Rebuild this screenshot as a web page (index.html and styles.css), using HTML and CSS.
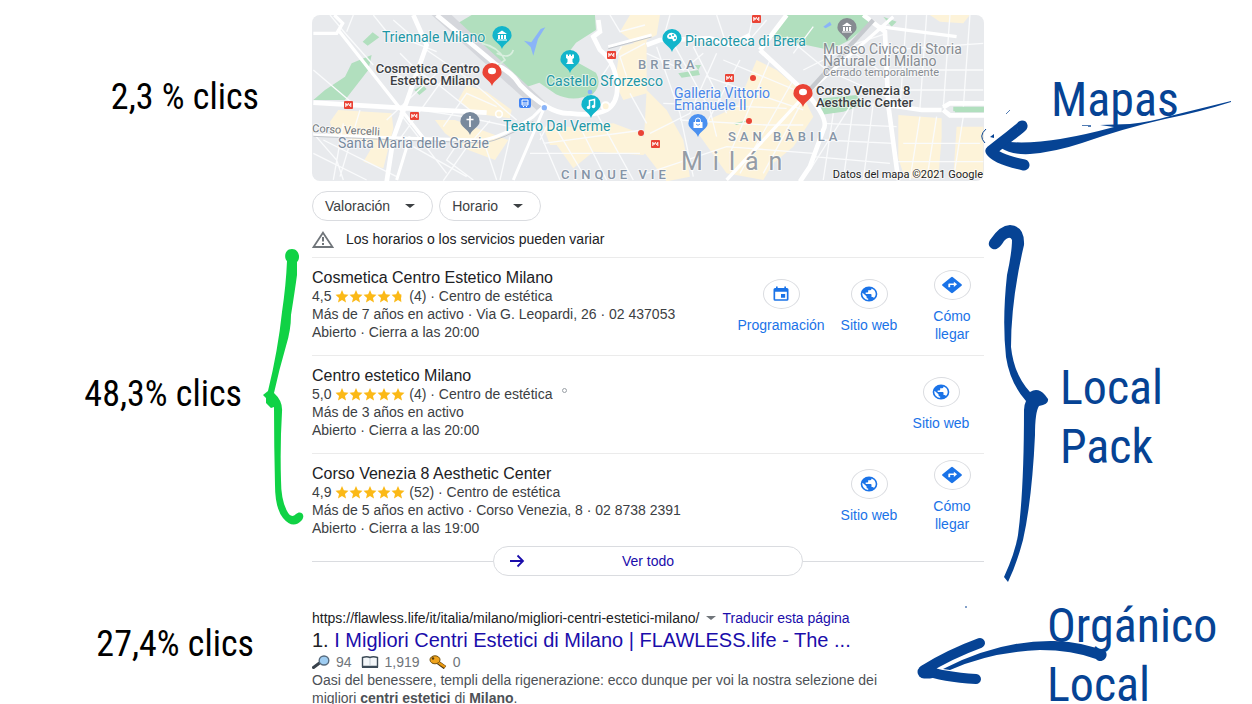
FILE: index.html
```html
<!DOCTYPE html>
<html lang="es">
<head>
<meta charset="utf-8">
<meta name="viewport" content="width=device-width, initial-scale=1">
<title>Reparto de clics en la búsqueda local</title>
<link rel="stylesheet" href="styles.css">
</head>
<body>
<svg class="defs" aria-hidden="true">
  <symbol id="star" viewBox="0 0 24 24"><path d="M12 0l3.400 8 8.600.8-6.500 5.800 1.900 8.400L12 18.600 4.600 23l1.900-8.400L0 8.800 8.600 8z"/></symbol>
  <symbol id="globe" viewBox="0 0 24 24" preserveAspectRatio="none"><path d="M12 2a10 10 0 1 0 0 20 10 10 0 0 0 0-20zm-1 17.930A8 8 0 0 1 4.210 10.210L9 15v1a2 2 0 0 0 2 2v1.930zm6.900-2.540A2 2 0 0 0 16 16h-1v-3a1 1 0 0 0-1-1H8v-2h2a1 1 0 0 0 1-1V7h2a2 2 0 0 0 2-2v-.410a8 8 0 0 1 2.900 12.800z"/></symbol>
  <symbol id="route" viewBox="0 0 24 24" preserveAspectRatio="none"><path d="M22.400 11l-9.400-9.400a1.400 1.400 0 0 0-2 0L1.600 11a1.400 1.400 0 0 0 0 2l9.400 9.400a1.400 1.400 0 0 0 2 0l9.400-9.400a1.400 1.400 0 0 0 0-2zM14 14.500V12h-4v3H8v-4a1 1 0 0 1 1-1h5V7.500l3.500 3.500z"/></symbol>
  <symbol id="calendar" viewBox="0 0 24 24" preserveAspectRatio="none"><path d="M17 12h-5v5h5zM16 2v2H8V2H6v2H5a2 2 0 0 0-2 2v13a2 2 0 0 0 2 2h14a2 2 0 0 0 2-2V6a2 2 0 0 0-2-2h-1V2zm3 17H5V9h14z"/></symbol>
  <symbol id="pin" viewBox="0 0 20 23"><path d="M10 0a9.600 9.600 0 0 0-9.600 9.600C.4 15 8 17 10 23c2-6 9.600-8 9.600-13.400A9.600 9.600 0 0 0 10 0z"/></symbol>
  <symbol id="metro" viewBox="0 0 9 8"><rect width="9" height="8" rx="1" fill="#ea4335"/><path d="M1.800 6V2.300l1.200 2.500 1.300-2.500 1.300 2.500 1.200-2.500V6" fill="none" stroke="#fff"/></symbol>
</svg>

<main class="page">
  <section class="row row-map">
    <div class="share share-map">2,3 % clics</div>
    <div class="map">
      <svg viewBox="0 0 672 166" preserveAspectRatio="xMidYMid slice" role="img" aria-label="Mapa de Milán">
        <rect width="672" height="166" fill="#e8eaed"/>
        <g transform="scale(.3333) translate(-6 -15)">
          <g fill="#fdf3d9">
            <path d="M470 225l60 20 75 55-5 25-110-15-45-40zM85 300l160 10 5 45-30 120-60-20 30-50-120-30-10-40zM375 330l60 0 160 60-40 60-80-30-70-50zM700 350l110 0 100-10 80 30 40 40-30 25-150-10-60 50-50-70-20 0z"/>
            <path d="M930 110l80-20 0 160-70 20-25-50zM960 15h90l-10 60-60 30-50-40zM1010 240l60 60 50 90 20 110-70 14-70-90zM1150 350l130-60 60-140 60 30 70 60 40 80-60 90-60 50-30 50-110-20zM1765 315l130 10 0 60-10 120-100 0-20-60zM1940 350h80v150h-90zM1860 15h120l-20 25-70-5z"/>
          </g>
          <g fill="#b1dfbe">
            <path d="M485 15h370l3 45-60 38-30 40 90 50q20 35-10 65-60 25-110 0l-50-35-45 15-35-10-105-105-20-30-45-45z"/>
            <path d="M10 270l35-30 60-40 20-40 60-25-10 45-70 90zM158 95l30-28 20 15-35 25zM313 240l25-15 12 12-22 18z"/>
            <path d="M1425 15h245l10 25-60 50-60 30-190-40 30-30zM1540 265l100-10 20 30-60 20-70 10zM1105 190l60-10 5 15-55 8zM1155 165l18 0-8 15zM1270 340l50-10-40 15zM1935 293h87v14h-87zM1720 20l40 15-15 15z"/>
          </g>
          <path d="M642 92l22 5 28-40 14-5-22 35-14 50-8-26z" fill="#8ab4f8"/>
          <path d="M365 15h60l285 265-30 20z" fill="#d5d7dc"/>
          <g fill="none" stroke="#fafbfc" stroke-width="4">
            <path d="M10 180l130 110M60 15l50 60 80 90M190 15l40 50 150 60M100 340l-30 170M150 300l-60 200M10 430l160 80M40 390l220 110M330 100l-80-70M350 120l130 90 140 120M300 170l80 50 100 80M300 250l-30 60 140 180M230 330l150-140M260 400l130-180 70-60M400 512l70-100 70-80M310 410l160 90M450 390l-40 60 80 60M520 390l40 120M600 380l-30 130M330 300l130 20 190 40M400 350l70-100 90 40M10 370l70 80 20 60M690 370l60 140M730 340l100 170M800 330l90 180M860 310l110 200M660 430h330M700 400l300-40M900 15l30 50 75-20M935 110l-60 90M950 200l-20-60 75-40M960 250l50 90M720 330l-30 60M130 15l-20 50M220 170l70 40M270 130l60 60"/>
            <path d="M1010 130l110 50 60-50M1040 110l70 200 40 190M1090 100l110 200 20 80M1150 110l100 200M1220 130l-80 180-120 60M1290 150l-100 190M1380 150l-120 280M1450 210l-160 280M1490 250l-130 240M1110 330l260 15 110 0M1060 280l370 15M1190 200l290 100M1240 150l240 100M1330 15l-20 90M1220 15l30 90M1370 30l-60 70M1080 15l-20 70M1540 340l220 10M1540 390l210 10M1510 440l230 20M1570 310l-30 200M1630 290l-30 220M1690 280l-30 230M1500 480l120-190M1780 400h230M1760 455h260M1830 320l-30 190M1880 320l-30 190M1960 320l-30 190M1730 240h290M1730 180h290M1740 120l280-20M1790 15l-20 280M1850 15l-20 280M1920 15l-20 280M1980 15l-20 280M1430 80l120 100 200 90M1480 180l160-80 90-30M1620 120l100 70M1450 130l60-80M1010 490l240-80 260 20"/>
          </g>
          <g fill="none" stroke="#fff">
            <path d="M10 70h70l18-30-25-25M85 60l260 330" stroke-width="10"/>
            <path d="M10 278l340 20 180 10M310 15l40 90-60 170-40 110-20 130M380 15l120 100 60 50q45 20 70 60 90 90 150 85 70 10 110-10 40-25 30-90-10-60-50-90l-20-40 20-15-5-35" stroke-width="14"/>
            <path d="M10 375l280 10 230 5q60-10 150-70l40-40M895 110l130-35M300 380l-40 130M700 300l-90 210" stroke-width="9"/>
            <path d="M1010 105l40-15 150-5 60 20 60-30M1350 120l140 130q70 80 50 110l-40 110-30 45M1430 15l-80 105M1660 15l65 50 10 220 30 225M1735 285l100 15 60 0M1900 292l20-12h110M1900 300l20 16h110" stroke-width="14"/>
            <path d="M1750 20l-260 230-240 260M1710 50l230 30" stroke-width="10"/>
          </g>
          <path d="M1930 290h92v14h-92z" fill="#b1dfbe"/>
          <path d="M10 379l280 12 230 8q60-10 150-65M895 116l130-35" stroke="#c1c5ca" fill="none" stroke-width="3"/>
          <path d="M1690 30l-200 220" stroke="#c6c9ce" fill="none" stroke-width="13"/>
          <path d="M515 100q50 10 70 50l-25 20M560 130q40 20 50-10" stroke="#d9efdf" fill="none" stroke-width="5"/>
          <g fill="#8ab4f8"><circle cx="703" cy="293" r="8"/><circle cx="840" cy="246" r="7"/><path d="M1540 50l20-15 5 10-18 10z"/></g>
          <circle cx="887" cy="289" r="12" fill="#fdf3d9" stroke="#fff" stroke-width="6"/>
          <circle cx="567" cy="312" r="10" fill="#fdf3d9" stroke="#fff" stroke-width="5"/>
        </g>

        <use href="#metro" x="32" y="86" width="9" height="8"/>
        <use href="#metro" x="98" y="97" width="9" height="8"/>
        <use href="#metro" x="295" y="36" width="9" height="8"/>
        <use href="#metro" x="440" y="0" width="9" height="8"/>
        <use href="#metro" x="413" y="59" width="9" height="8"/>
        <use href="#metro" x="339" y="125" width="9" height="8"/>
        <g fill="#ea4335"><circle cx="329" cy="118" r="3"/><circle cx="441" cy="63" r="3"/><circle cx="437" cy="106" r="3"/></g>
        <rect x="207" y="83" width="12" height="10" rx="2" fill="#4285f4"/>
        <path d="M210 85h6v5h-6zM210 88h6M211 92l1-1M215 92l-1-1" fill="none" stroke="#fff"/>

        <g class="map-pins">
          <g transform="translate(180 11)"><use href="#pin" width="20" height="23" fill="#12b5cb"/><path d="M5 8l5-3.500L15 8zM6 9h2v4H6zm3 0h2v4H9zm3 0h2v4h-2zM5 13.500h10v1H5z" fill="#fff"/></g>
          <g transform="translate(248 35)"><use href="#pin" width="20" height="23" fill="#12b5cb"/><path d="M6 4.500h2V6h1V4.500h2V6h1V4.500h2V8l-1.500 1v3l1.500 2H6l1.500-2V9L6 8z" fill="#fff"/></g>
          <g transform="translate(269 80)"><use href="#pin" width="20" height="23" fill="#12b5cb"/><path d="M8.500 12.500V5.500l5-1v7" fill="none" stroke="#fff" stroke-width="1.500"/><circle cx="7.500" cy="12.500" r="1.700" fill="#fff"/><circle cx="12.500" cy="11.500" r="1.700" fill="#fff"/></g>
          <g transform="translate(350 14)"><use href="#pin" width="20" height="23" fill="#12b5cb"/><path d="M5 7q2-4 6-3 4 1 4 5-1 4-4 3 0-3-3-2-3 0-3-3z" fill="#fff"/><g fill="#12b5cb"><circle cx="8" cy="7" r="1"/><circle cx="11" cy="6" r="1"/><circle cx="13" cy="9" r="1"/></g></g>
          <g transform="translate(148 97)"><use href="#pin" width="20" height="23" fill="#78899d"/><path d="M10 4v11M6.500 7.500h7" fill="none" stroke="#fff" stroke-width="1.700"/></g>
          <g transform="translate(525 3)"><use href="#pin" width="20" height="23" fill="#868b91"/><path d="M5 8l5-3.500L15 8zM6 9h2v4H6zm3 0h2v4H9zm3 0h2v4h-2zM5 13.500h10v1H5z" fill="#fff"/></g>
          <g transform="translate(376 99)"><use href="#pin" width="20" height="23" fill="#4a90f0"/><path d="M5.500 8h9v6h-9z" fill="#fff"/><path d="M7.500 8V6.500a2.500 2.500 0 0 1 5 0V8" fill="none" stroke="#fff"/><path d="M8 10q2 2.500 4 0" fill="none" stroke="#4a90f0"/></g>
          <g transform="translate(170 48)"><use href="#pin" width="20" height="23" fill="#ea4335"/><ellipse cx="10" cy="8" rx="4" ry="3.300" fill="#fff"/></g>
          <g transform="translate(481 69)"><use href="#pin" width="20" height="23" fill="#ea4335"/><ellipse cx="10" cy="8" rx="4" ry="3.300" fill="#fff"/></g>
        </g>

        <g class="map-text">
          <text class="poi culture" x="70" y="27">Triennale Milano</text>
          <text class="poi culture" x="234" y="71">Castello Sforzesco</text>
          <text class="poi culture" x="191" y="116">Teatro Dal Verme</text>
          <text class="poi culture" x="373" y="31">Pinacoteca di Brera</text>
          <text class="poi church" x="26" y="133">Santa Maria delle Grazie</text>
          <text class="poi shop" x="362" y="83">Galleria Vittorio</text>
          <text class="poi shop" x="362" y="95">Emanuele II</text>
          <text class="poi closed" x="511" y="39">Museo Civico di Storia</text>
          <text class="poi closed" x="511" y="51">Naturale di Milano</text>
          <text class="note closed" x="511" y="61">Cerrado temporalmente</text>
          <text class="place" x="168" y="58" text-anchor="end">Cosmetica Centro</text>
          <text class="place" x="168" y="70" text-anchor="end">Estetico Milano</text>
          <text class="place" x="504" y="80">Corso Venezia 8</text>
          <text class="place" x="504" y="92">Aesthetic Center</text>
          <text class="note street" x="0" y="117" transform="rotate(3 0 117)">Corso Vercelli</text>
          <text class="area" x="326" y="54">BRERA</text>
          <text class="area" x="416" y="126">SAN BÀBILA</text>
          <text class="area" x="249" y="164">CINQUE VIE</text>
          <text class="city" x="369" y="155">Milán</text>
          <text class="credit" x="671" y="163" text-anchor="end">Datos del mapa ©2021 Google</text>
        </g>
      </svg>
    </div>
    <div class="side">
      <div class="tag tag-map">Mapas</div>
      <svg class="arrow arrow-map" viewBox="976 98 260 76" aria-hidden="true">
        <path d="M1024 165Q996 159 991 151Q997 146 1010 136T1022 126" fill="none" stroke="#064394" stroke-width="11" stroke-linecap="round" stroke-linejoin="round"/>
        <path d="M1231 101L1170 116Q1150 122 1130 124L1100 125 1114 127Q1048 145 1010 142L1001 148Q1012 155 1030 154Q1055 152 1082 143Q1125 128 1165 119Q1200 112 1231 102z" fill="#064394"/>
        <path d="M986 129q-8 7-1 14" fill="none" stroke="#064394"/>
        <path d="M990 137l4-3v4z" fill="#064394"/>
        <path d="M1006 114l4-4M1082 125.500h9M1088 126.500h3" fill="none" stroke="#064394" stroke-width=".7"/>
      </svg>
    </div>
  </section>

  <section class="row row-pack">
    <div class="share-wrap">
      <div class="share share-pack">48,3% clics</div>
      <svg class="brace-left" viewBox="262 248 42 278" aria-hidden="true">
        <path d="M292 249C284 249 284 259 287 261Q286 285 282 312Q278 350 268 391L263 395 266 398 266 403 271 408 274 407Q274 445 275 485Q275 508 283 518Q293 530 302 520C306 514 300 510 296 514Q291 519 287 511Q281 500 281 480Q280 445 282 412Q283 401 274 393Q279 370 286 346Q291 330 291 315Q295 290 297 275L297 262C301 258 299 249 292 249z" fill="#10d245"/>
      </svg>
    </div>
    <div class="pack">
      <div class="filters">
        <button type="button" class="chip">Valoración<span class="caret"></span></button>
        <button type="button" class="chip">Horario<span class="caret"></span></button>
      </div>
      <p class="notice">
        <svg viewBox="0 0 22 17" aria-hidden="true"><path d="M11 1.700L20.500 16h-19z" fill="none" stroke="#70757a" stroke-width="1.800"/><path d="M11 6v4.500M11 12v2" stroke="#70757a" stroke-width="2"/></svg>
        Los horarios o los servicios pueden variar
      </p>
      <article class="item">
        <div class="info">
          <h2>Cosmetica Centro Estetico Milano</h2>
          <p>4,5 <span class="stars"><svg><use href="#star"/></svg><svg><use href="#star"/></svg><svg><use href="#star"/></svg><svg><use href="#star"/></svg><svg class="half"><use href="#star"/></svg></span> (4) · Centro de estética</p>
          <p>Más de 7 años en activo · Via G. Leopardi, 26 · 02 437053</p>
          <p>Abierto · Cierra a las 20:00</p>
        </div>
        <nav class="actions">
          <a class="action booking" href="#"><span class="ring"><svg><use href="#calendar"/></svg></span>Programación</a>
          <a class="action site" href="#"><span class="ring"><svg><use href="#globe"/></svg></span>Sitio web</a>
          <a class="action directions" href="#"><span class="ring"><svg class="big"><use href="#route"/></svg></span>Cómo llegar</a>
        </nav>
      </article>
      <article class="item">
        <div class="info">
          <h2>Centro estetico Milano</h2>
          <p>5,0 <span class="stars"><svg><use href="#star"/></svg><svg><use href="#star"/></svg><svg><use href="#star"/></svg><svg><use href="#star"/></svg><svg><use href="#star"/></svg></span> (4) · Centro de estética <span class="dot"></span></p>
          <p>Más de 3 años en activo</p>
          <p>Abierto · Cierra a las 20:00</p>
        </div>
        <nav class="actions">
          <a class="action site" href="#"><span class="ring"><svg><use href="#globe"/></svg></span>Sitio web</a>
        </nav>
      </article>
      <article class="item">
        <div class="info">
          <h2>Corso Venezia 8 Aesthetic Center</h2>
          <p>4,9 <span class="stars"><svg><use href="#star"/></svg><svg><use href="#star"/></svg><svg><use href="#star"/></svg><svg><use href="#star"/></svg><svg><use href="#star"/></svg></span> (52) · Centro de estética</p>
          <p>Más de 5 años en activo · Corso Venezia, 8 · 02 8738 2391</p>
          <p>Abierto · Cierra a las 19:00</p>
        </div>
        <nav class="actions">
          <a class="action site" href="#"><span class="ring"><svg><use href="#globe"/></svg></span>Sitio web</a>
          <a class="action directions" href="#"><span class="ring"><svg class="big"><use href="#route"/></svg></span>Cómo llegar</a>
        </nav>
      </article>
      <div class="more">
        <a class="more-link" href="#"><svg viewBox="0 0 16 14" aria-hidden="true"><path d="M1 7h13M8.500 1.500L14 7l-5.500 5.500" fill="none" stroke="#1a0dab" stroke-width="1.800"/></svg><span>Ver todo</span></a>
      </div>
    </div>
    <div class="side side-pack">
      <svg class="brace-right" viewBox="988 224 62 362" aria-hidden="true">
        <path d="M990 240Q1000 225 1010 225Q1025 226 1024 245Q1011 300 1011 347Q1014 375 1030 392Q1038 387 1045 395L1048 399Q1049 404 1039 406Q1035 412 1035 435Q1032 500 1023 540Q1017 563 1008 582L1004 577Q1015 553 1018 535Q1024 490 1024 410Q1024 405 1026 401Q1010 383 1006 357Q1002 320 1007 275Q1012 252 1012 240Q1010 235 1004 241C998 251 994 250 991 248Q987 245 990 240z" fill="#064394"/>
      </svg>
      <div class="tag">Local<br>Pack</div>
    </div>
  </section>

  <section class="row row-organic">
    <div class="share share-organic">27,4% clics</div>
    <article class="organic">
      <p class="url"><cite>https://flawless.life/it/italia/milano/migliori-centri-estetici-milano/</cite><span class="caret"></span><a href="#">Traducir esta página</a></p>
      <h2>1. <a href="#">I Migliori Centri Estetici di Milano | FLAWLESS.life - The ...</a></h2>
      <p class="stats">
        <svg viewBox="0 0 18 14" aria-hidden="true"><path d="M1.500 12.500l6-4.500" stroke="#39424c" stroke-width="3" stroke-linecap="round"/><ellipse cx="12" cy="5.500" rx="4.800" ry="4.500" fill="#9fcdf2" stroke="#566a7d" stroke-width="1.400"/></svg>94
        <svg viewBox="0 0 18 14" aria-hidden="true"><path d="M1.500 2.500Q6 1 9 2.500q3-1.500 7.500 0v9H1.500z" fill="#f4f7f9" stroke="#3d4b57" stroke-width="1.400"/><path d="M9 3v8" stroke="#c3ccd3"/><path d="M1 12.500h16" stroke="#3d4b57"/></svg>1,919
        <svg viewBox="0 0 18 14" aria-hidden="true"><path d="M7 6l9 6.500" stroke="#4a3412" stroke-width="4"/><path d="M7 6l9 6" stroke="#e8970f" stroke-width="2.500"/><ellipse cx="6" cy="4.800" rx="5" ry="4" fill="#f0a41c" stroke="#71500f"/><circle cx="4" cy="3.500" r="1.200" fill="#5a3d0c"/></svg>0
      </p>
      <p class="snippet">Oasi del benessere, templi della rigenerazione: ecco dunque per voi la nostra selezione dei migliori <b>centri estetici</b> di <b>Milano</b>.</p>
    </article>
    <div class="side">
      <div class="tag tag-organic">Orgánico<br>Local</div>
      <svg class="arrow arrow-organic" viewBox="914 604 194 84" aria-hidden="true">
        <path d="M980 643Q950 654 924 670Q943 677 976 679" fill="none" stroke="#064394" stroke-width="10" stroke-linecap="round" stroke-linejoin="round"/>
        <path d="M924 672l6 0" stroke="#064394" stroke-width="13" stroke-linecap="round"/>
        <path d="M943 669Q1000 640 1054 641Q1085 642 1106 652C1109 659 1100 664 1096 659Q1072 650 1040 650Q990 652 950 670z" fill="#064394"/>
        <path d="M965 607h2" stroke="#064394"/>
      </svg>
    </div>
  </section>
</main>
</body>
</html>
```
FILE: styles.css
```css
* { box-sizing: border-box; }

body {
  margin: 0;
  background: #fff;
  color: #3c4043;
  font: 14px/18px "Liberation Sans", Arial, sans-serif;
}

h2, p { margin: 0; font-weight: 400; }
a { color: #1a0dab; text-decoration: none; }
svg { display: block; flex: none; }
.defs { position: absolute; width: 0; height: 0; }

.row {
  display: grid;
  grid-template-columns: minmax(0, 312fr) minmax(0, 672fr) minmax(0, 268fr);
}
.side { position: relative; }

/* Annotations */
.share {
  color: #000;
  font: 36px/44px "Roboto Condensed", Roboto, sans-serif;
  text-align: right;
  white-space: nowrap;
}
.share-map { padding: 60px 53px 0 0; }
.share-pack { align-self: center; padding-top: 20px; }
.share-organic { padding: 22px 58px 0 0; }
.share-wrap { display: flex; justify-content: flex-end; gap: 20px; padding-right: 8px; }
.brace-left { width: 42px; height: 278px; margin-top: 67px; }

.tag {
  color: #064394;
  font: 48px/59px "Roboto Condensed", Roboto, sans-serif;
}
.tag-map { padding: 55px 0 0 67px; }
.tag-organic { padding-left: 63px; margin-top: -4px; }
.side-pack { display: flex; align-items: flex-start; gap: 10px; padding-left: 4px; }
.side-pack .tag { margin-top: 177px; }
.brace-right { width: 62px; height: 362px; margin-top: 43px; }
.arrow { position: absolute; }
.arrow-map { left: -8px; top: 83px; width: 260px; height: 76px; }
.arrow-organic { left: -70px; top: 4px; width: 194px; height: 84px; }

/* Map */
.row-map { padding-top: 15px; }
.map { height: 166px; border-radius: 8px; overflow: hidden; }
.map svg { width: 100%; height: 100%; }
.map-text { font-family: Roboto, sans-serif; stroke: #fff; stroke-opacity: .6; stroke-width: 2px; stroke-linejoin: round; }
.map-text text { paint-order: stroke; }
.poi { font-size: 14px; }
.note { font-size: 11px; }
.culture { fill: #1e97a6; }
.church { fill: #78899d; }
.shop { fill: #4a87e8; }
.closed { fill: #868b91; }
.street { fill: #70757a; }
.place { font-size: 13px; font-weight: 500; fill: #3c4043; }
.area { font-size: 13px; font-weight: 500; letter-spacing: 4px; fill: #8594a6; }
.city { font-size: 25px; letter-spacing: 10px; fill: #959ca5; }
.credit { font-size: 11px; fill: #222; }

/* Local pack */
.row-pack { padding-bottom: 14px; }
.filters { display: flex; gap: 6px; padding-top: 10px; }
.chip {
  display: flex;
  align-items: center;
  gap: 15px;
  height: 30px;
  padding: 0 17px 0 12px;
  border: 1px solid #dadce0;
  border-radius: 15px;
  background: #fff;
  color: #3c4043;
  font: inherit;
}
.caret { flex: none; border: 5px solid transparent; border-top: 4px solid currentColor; border-bottom: 0; }
.notice { display: flex; align-items: center; gap: 12px; height: 36px; color: #202124; }
.notice svg { width: 22px; height: 17px; }

.item { display: flex; justify-content: space-between; border-top: 1px solid #ebebeb; }
.info { padding: 11px 0 14px; }
.item:last-of-type .info { padding-bottom: 2px; }
.info h2 { color: #202124; font-size: 16px; line-height: 18px; }
.stars { display: inline-flex; vertical-align: -2px; }
.stars svg { width: 14px; height: 13px; fill: #fbb917; }
.stars .half { clip-path: inset(0 4px 0 0); }
.dot { display: inline-block; width: 5px; height: 5px; margin-left: 6px; border: 1px solid #9aa0a6; border-radius: 50%; vertical-align: 6px; }

.actions { display: flex; align-items: center; }
.action { display: flex; flex-direction: column; align-items: center; gap: 7px; color: #1a73e8; text-align: center; }
.ring { display: grid; place-items: center; width: 37px; height: 30px; border: 1px solid #dadce0; border-radius: 50%; }
.ring svg { width: 20px; height: 18px; fill: #1a73e8; }
.ring .big { width: 22px; height: 18px; }
.booking { width: 90px; }
.site { width: 86px; }
.directions { width: 64px; padding: 0 8px; margin-left: 8px; }

.more { display: flex; align-items: center; margin-top: 7px; }
.more::before, .more::after { content: ""; flex: 1; border-top: 1px solid #dadce0; }
.more-link {
  width: 46%;
  display: flex;
  align-items: center;
  height: 30px;
  padding: 0 15px;
  border: 1px solid #dadce0;
  border-radius: 15px;
}
.more-link svg { width: 16px; height: 14px; }
.more-link span { flex: 1; padding-right: 16px; text-align: center; }

/* Organic result */
.organic { padding-top: 9px; }
.url { display: flex; align-items: center; white-space: nowrap; color: #202124; }
.url cite { font-style: normal; }
.url .caret { margin: 0 6px 0 7px; color: #70757a; }
.organic h2 { color: #202124; font-size: 20px; line-height: 26px; white-space: nowrap; }
.stats { display: flex; align-items: center; gap: 6px; color: #70757a; }
.stats svg { width: 18px; height: 14px; }
.stats svg:not(:first-child) { margin-left: 3px; }
.snippet { padding-right: 12%; color: #4d5156; }
```
